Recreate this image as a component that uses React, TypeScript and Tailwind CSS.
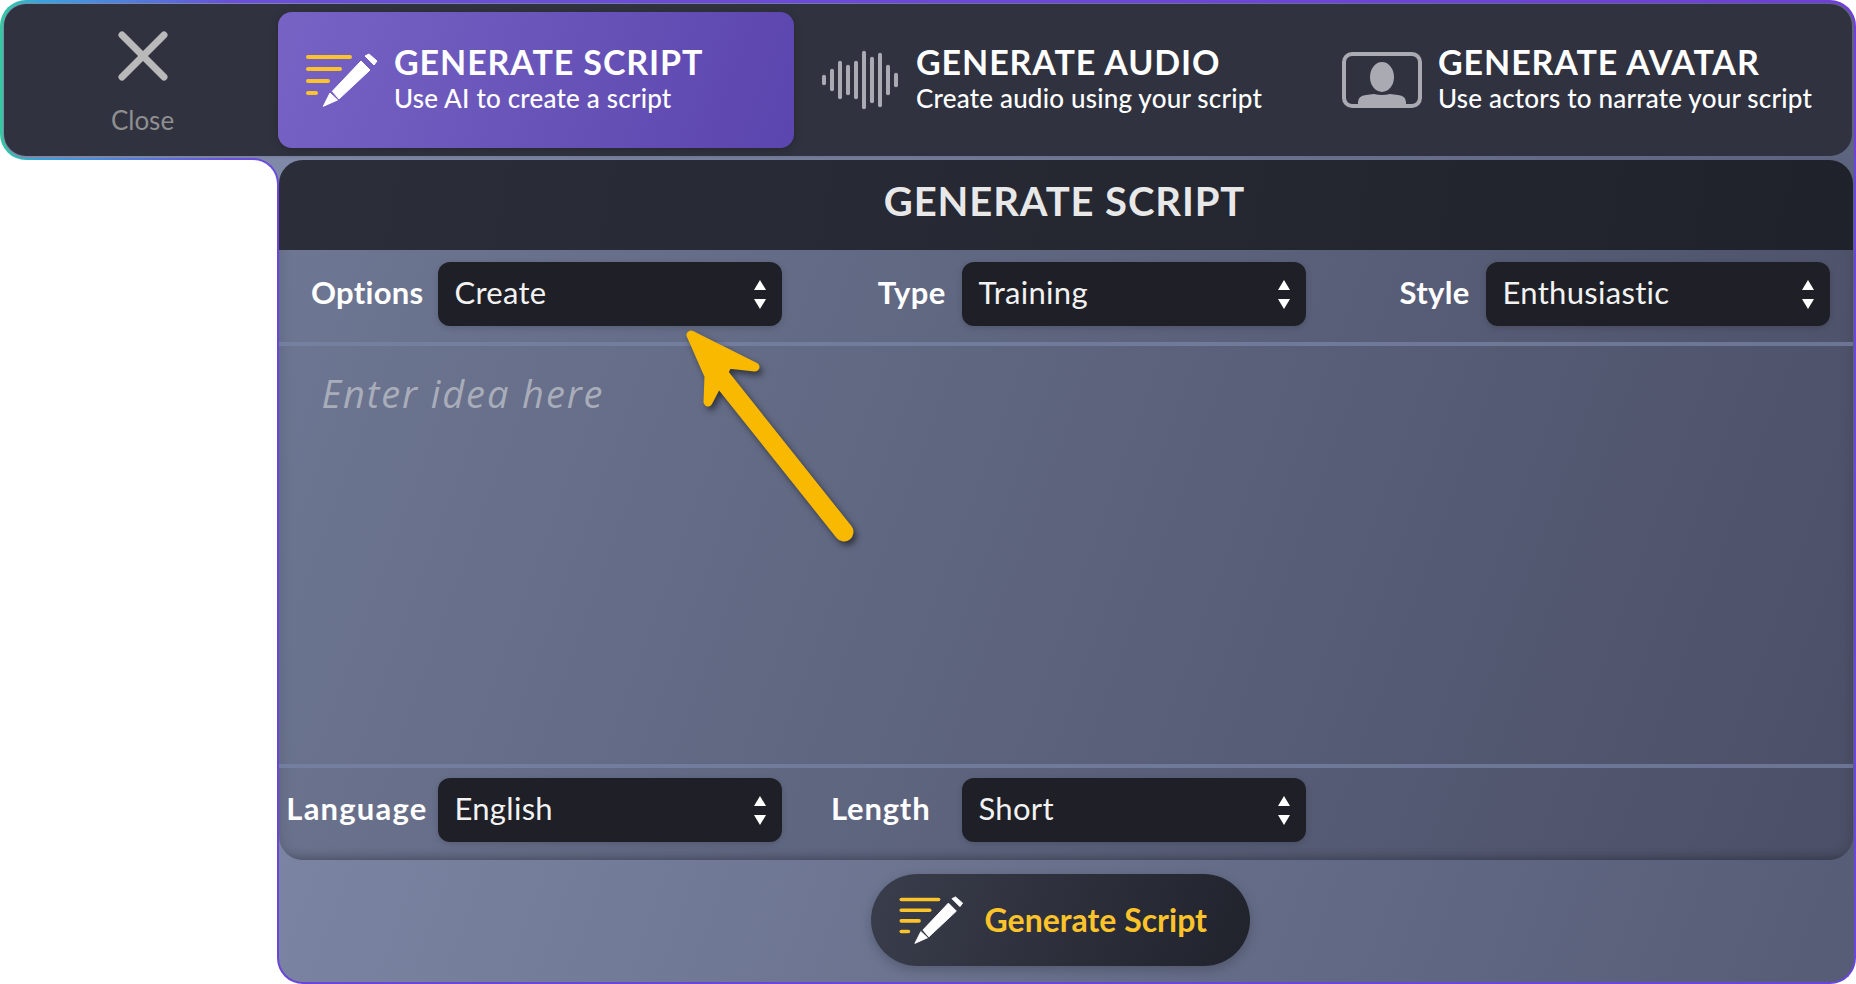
const font = "font-['Lato','Noto_Sans',sans-serif]";

function ScriptIcon({ className }: { className: string }) {
    return (
        <svg viewBox="0 0 72 54" className={className}>
            <g stroke="#fcc42a" strokeWidth="4" strokeLinecap="round">
                <line x1="2" y1="4" x2="44" y2="4" />
                <line x1="2" y1="16" x2="34" y2="16" />
                <line x1="2" y1="28" x2="22" y2="28" />
                <line x1="2" y1="40" x2="10" y2="40" />
            </g>
            <g fill="#fff" stroke="#fff" strokeWidth="1" strokeLinejoin="round">
                <polygon points="59,3 63,1 71,8 68,12" />
                <polygon points="55,8 64,17 33,46 26.3,38.3" />
                <polygon points="17.3,53.3 24,40 31.5,47" />
            </g>
        </svg>
    );
}

function AudioIcon() {
    const bars = [3.3, 9.3, 17.3, 13.3, 17.3, 27.3, 21.3, 25.3, 13.3, 5.3];
    return (
        <svg viewBox="0 0 80 60" className="h-[60px] w-[80px]">
            {bars.map((h, i) => (
                <line
                    key={i}
                    x1={4 + i * 8}
                    x2={4 + i * 8}
                    y1={30 - h}
                    y2={30 + h}
                    stroke="#a9aab2"
                    strokeWidth="4"
                    strokeLinecap="round"
                />
            ))}
        </svg>
    );
}

function AvatarIcon() {
    return (
        <svg viewBox="0 0 80 56" className="h-[56px] w-[80px]">
            <rect x="2" y="2" width="76" height="52" rx="8" fill="none" stroke="#a9aab2" strokeWidth="4" />
            <ellipse cx="40" cy="25" rx="12" ry="15" fill="#a9aab2" />
            <path d="M16 54 V50 Q16 44 24 43 L32 42 Q40 44 48 42 L56 43 Q64 44 64 50 V54 Z" fill="#a9aab2" />
        </svg>
    );
}

function NavText({ title, sub }: { title: string; sub: string }) {
    return (
        <div className="flex flex-col pb-[2px] text-white">
            <span className="text-[34px] leading-[34px] font-bold tracking-[0.9px]">{title}</span>
            <span className="mt-[4px] text-[26px] leading-[30px] font-medium tracking-[0.2px]">{sub}</span>
        </div>
    );
}

function Field({ label, value, gap, labelClass = "tracking-[0.3px]" }: { label: string; value: string; gap: string; labelClass?: string }) {
    return (
        <div className={`flex items-center justify-end ${gap}`}>
            <span className={`pb-[4px] text-[31px] font-bold text-white ${labelClass}`}>{label}</span>
            <div className="flex h-[64px] w-[344px] items-center justify-between rounded-[12px] bg-[#1f2027] pr-[16px] pl-[17px] shadow-[0_2px_6px_rgba(0,0,0,0.15)]">
                <span className="pb-[4px] text-[31px] tracking-[0.3px] text-[#f2f2f2]">{value}</span>
                <div className="flex flex-col gap-[9px]">
                    <div className="h-0 w-0 border-x-[6px] border-b-[10px] border-x-transparent border-b-white" />
                    <div className="h-0 w-0 border-x-[6px] border-t-[10px] border-x-transparent border-t-white" />
                </div>
            </div>
        </div>
    );
}

export default function App() {
    return (
        <div className={`relative h-[984px] w-[1856px] overflow-hidden bg-white ${font}`}>
            {/* top bar with the coloured outline */}
            <div className="h-[160px] rounded-t-[26px] rounded-bl-[26px] bg-[linear-gradient(90deg,#34c9a0_0px,#38a3dc_40px,#4c86de_110px,#6a4fdc_230px,#6f3fd6_100%)] p-[2.5px]">
                <div className="h-full rounded-t-[24px] rounded-bl-[24px] bg-[linear-gradient(100deg,#808aa8,#5c6480)] px-[1.5px] pt-[1.5px] pb-[2px]">
                    <div className="flex h-full items-center rounded-[22px] bg-[#30323f]">
                        <div className="flex w-[274px] flex-col items-center pt-[5px] pl-[3px]">
                            <svg viewBox="0 0 50 50" className="h-[50px] w-[50px]">
                                <g stroke="#b9b9b9" strokeWidth="7" strokeLinecap="round">
                                    <line x1="4" y1="4" x2="46" y2="46" />
                                    <line x1="46" y1="4" x2="4" y2="46" />
                                </g>
                            </svg>
                            <span className="mt-[25px] text-[26px] leading-[28px] text-[#8f8f8f]">Close</span>
                        </div>
                        <div className="flex h-[136px] w-[516px] items-center gap-[16px] rounded-[14px] bg-[linear-gradient(110deg,#7763c4,#5b45ae)] pl-[28px] shadow-[0_2px_8px_rgba(0,0,0,0.2)]">
                            <ScriptIcon className="h-[54px] w-[72px]" />
                            <NavText title="GENERATE SCRIPT" sub="Use AI to create a script" />
                        </div>
                        <div className="ml-[26px] flex w-[522px] items-center gap-[16px]">
                            <AudioIcon />
                            <NavText title="GENERATE AUDIO" sub="Create audio using your script" />
                        </div>
                        <div className="flex items-center gap-[16px]">
                            <AvatarIcon />
                            <NavText title="GENERATE AVATAR" sub="Use actors to narrate your script" />
                        </div>
                    </div>
                </div>
            </div>

            <div className="flex h-[824px]">
                {/* white notch left of the panel */}
                <div className="relative z-10 flex w-[276.5px] justify-end">
                    <div className="-mt-[2.5px] -mr-[2.5px] h-[30px] w-[30px] bg-[#808aa8]">
                        <div className="h-full rounded-tr-[26px] border-t-[2.5px] border-r-[2.5px] border-[#6a4bdc] bg-white" />
                    </div>
                </div>

                <div className="-mt-[2.5px] flex h-[826.5px] w-[1579.5px] flex-col rounded-b-[26px] border-x-[2.5px] border-b-[2.5px] border-x-[#6a46d8] border-b-[#6a46d8] bg-[linear-gradient(110deg,#808aa8,#565c76)] pt-[2.5px] pr-[1.5px]">
                    <div className="flex h-[700px] flex-col overflow-hidden rounded-[24px] bg-[linear-gradient(110deg,#6e7793,#4b4f67)] shadow-[inset_0_0_14px_rgba(0,0,0,0.15)]">
                        <div className="flex h-[90px] items-center justify-center bg-[linear-gradient(100deg,#2b2e39,#20222b)] pr-[2px] pb-[8px]">
                            <h1 className="text-[40px] font-bold tracking-[0.9px] text-[#e8e8e8]">GENERATE SCRIPT</h1>
                        </div>
                        <div className="grid h-[92px] grid-cols-[503px_524px_524px] items-center pb-[4px]">
                            <Field label="Options" value="Create" gap="gap-[14px]" />
                            <Field label="Type" value="Training" gap="gap-[16px]" />
                            <Field label="Style" value="Enthusiastic" gap="gap-[16px]" />
                        </div>
                        <div className="h-[4px] bg-[#7985a6]/70" />
                        <textarea
                            placeholder="Enter idea here"
                            className="min-h-0 flex-1 resize-none bg-transparent pt-[24px] pl-[43px] font-['Open_Sans',sans-serif] text-[38px] leading-[46px] font-normal tracking-[1.9px] italic outline-none placeholder:text-[#a9adba]"
                        />
                        <div className="h-[4px] bg-[#7985a6]/70" />
                        <div className="grid h-[92px] grid-cols-[503px_524px_524px] items-center pb-[8px] shadow-[inset_0_-10px_12px_-10px_rgba(0,0,0,0.3)]">
                            <Field label="Language" value="English" gap="gap-[10px]" labelClass="tracking-[1.2px]" />
                            <Field label="Length" value="Short" gap="gap-[31px]" labelClass="tracking-[0.8px]" />
                        </div>
                    </div>
                    <div className="flex justify-center pt-[14px] pr-[11px]">
                        <button className="flex h-[92px] w-[379px] items-center gap-[21px] rounded-full bg-[linear-gradient(110deg,#3a3d4b,#20222c)] pl-[28px] shadow-[0_4px_12px_rgba(0,0,0,0.2)]">
                            <ScriptIcon className="h-[48px] w-[65px]" />
                            <span className="text-[32px] font-bold text-[#fcc42a]">Generate Script</span>
                        </button>
                    </div>
                </div>
            </div>

            {/* annotation arrow on top of the form */}
            <svg
                viewBox="0 0 180 220"
                className="absolute top-[326px] left-[681px] h-[220px] w-[180px] drop-shadow-[3px_4px_3px_rgba(0,0,0,0.5)]"
            >
                <polygon
                    points="10,9 74,41 47,38 27,76 28,50"
                    fill="#f8b900"
                    stroke="#f8b900"
                    strokeWidth="9"
                    strokeLinejoin="round"
                />
                <line x1="34" y1="44" x2="163" y2="206" stroke="#f8b900" strokeWidth="19" strokeLinecap="round" />
            </svg>
        </div>
    );
}
